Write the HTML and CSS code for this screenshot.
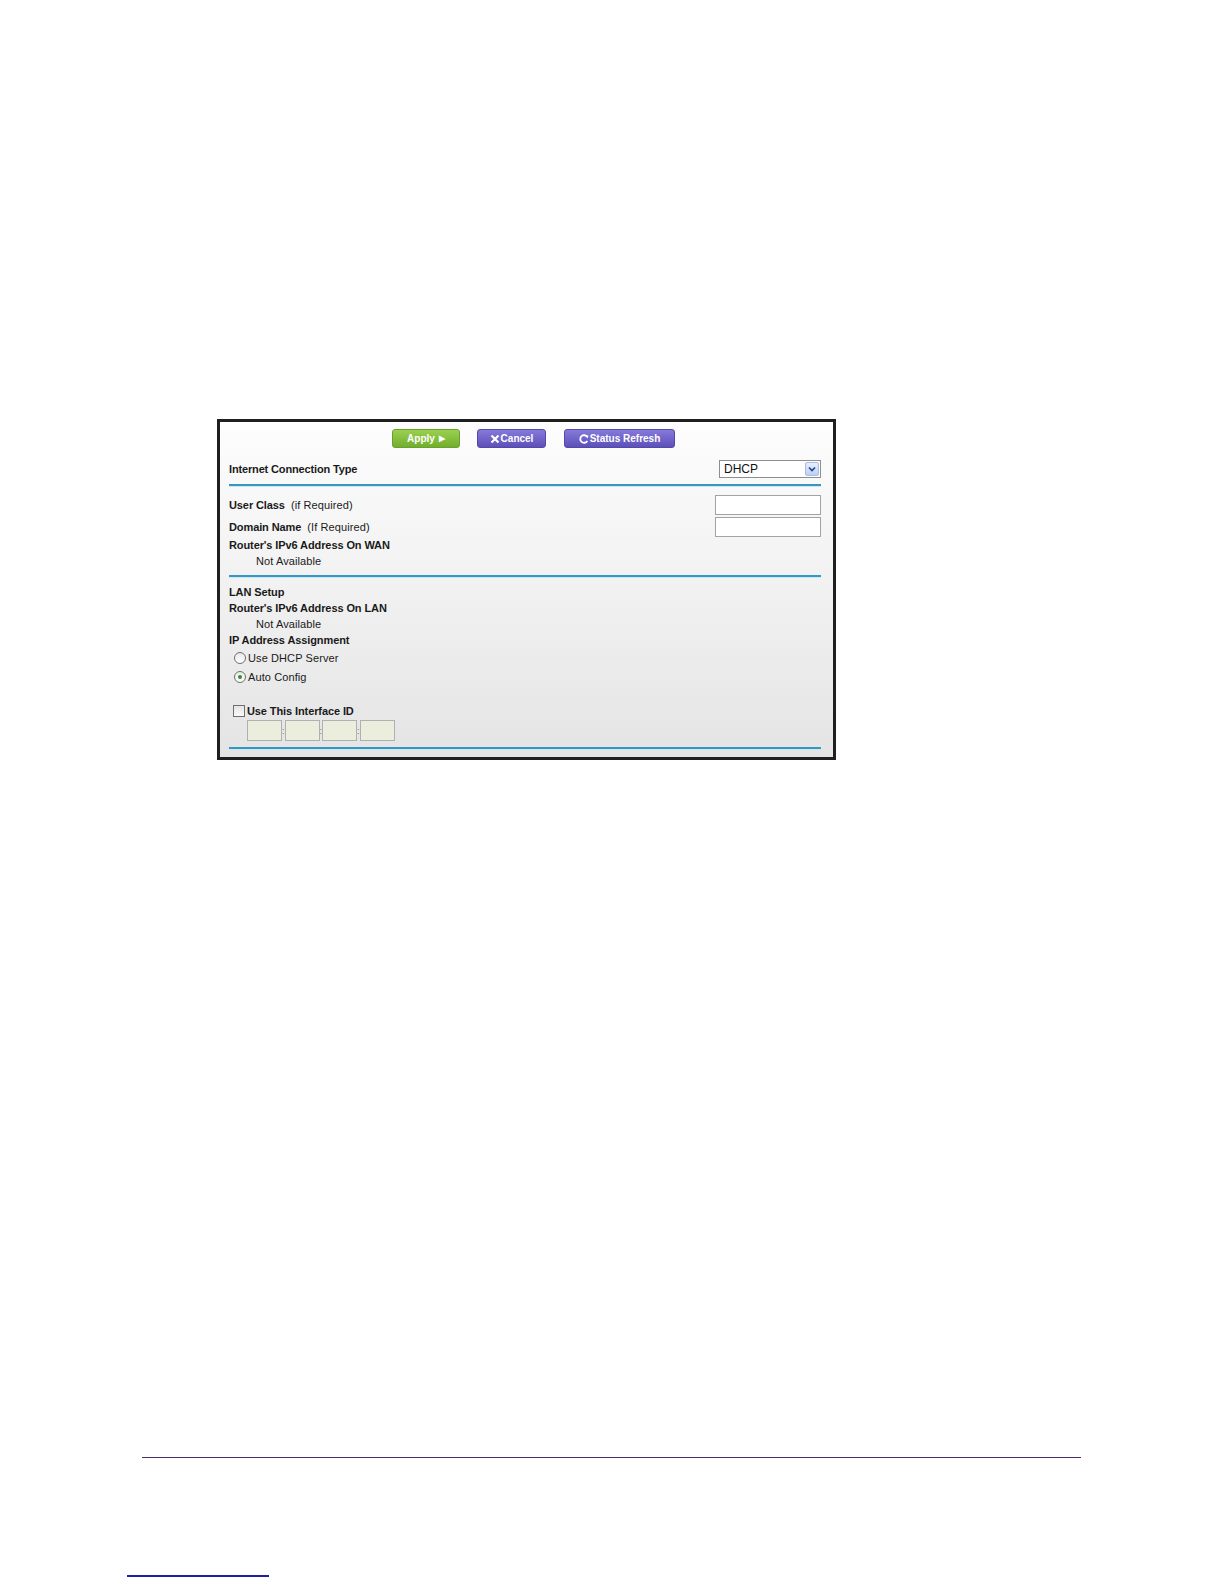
FILE: index.html
```html
<!DOCTYPE html>
<html lang="en">
<head>
<meta charset="utf-8">
<title>Internet Connection Type - DHCP</title>
<link rel="stylesheet" href="styles.css">
</head>
<body>
<div class="figure">
  <div class="toolbar">
    <span class="btn btn-green">Apply <span class="tri">&#9654;</span></span>
    <span class="btn btn-purple"><svg class="ico" viewBox="0 0 10 10" width="10" height="10"><path d="M1.5 1.5 L8.5 8.5 M8.5 1.5 L1.5 8.5" stroke="#fff" stroke-width="2.2" fill="none"/></svg>Cancel</span>
    <span class="btn btn-purple btn-wide"><svg class="ico" viewBox="0 0 10 10" width="10" height="10"><path d="M8.3 3 A3.8 3.8 0 1 0 8.3 7" stroke="#fff" stroke-width="1.8" fill="none"/><path d="M6.6 1.2 L9.4 1.6 L8.8 4.4 Z" fill="#fff"/></svg>Status Refresh</span>
  </div>

  <div class="row row-ict">
    <span class="lbl">Internet Connection Type</span>
    <span class="select"><span class="select-val">DHCP</span><span class="select-btn"><svg viewBox="0 0 8 6" width="8" height="6"><path d="M1 1.5 L4 4.5 L7 1.5" stroke="#24408a" stroke-width="1.6" fill="none"/></svg></span></span>
  </div>
  <div class="rule rule-1"></div>

  <div class="row row-field">
    <span><span class="lbl">User Class</span><span class="hint">(if Required)</span></span>
    <span class="input"></span>
  </div>
  <div class="row row-field row-field2">
    <span><span class="lbl">Domain Name</span><span class="hint">(If Required)</span></span>
    <span class="input"></span>
  </div>
  <div class="row line"><span class="lbl">Router's IPv6 Address On WAN</span></div>
  <div class="row line indent">Not Available</div>
  <div class="rule rule-2"></div>

  <div class="row line lan"><span class="lbl">LAN Setup</span></div>
  <div class="row line"><span class="lbl">Router's IPv6 Address On LAN</span></div>
  <div class="row line indent">Not Available</div>
  <div class="row line"><span class="lbl">IP Address Assignment</span></div>
  <div class="row line opt opt-1"><span class="radio"></span>Use DHCP Server</div>
  <div class="row line opt opt-2"><span class="radio checked"></span>Auto Config</div>
  <div class="row line opt opt-3"><span class="check"></span><span class="lbl">Use This Interface ID</span></div>
  <div class="ifid">
    <span class="idbox"></span><span class="colon">:</span><span class="idbox"></span><span class="colon">:</span><span class="idbox"></span><span class="colon">:</span><span class="idbox"></span>
  </div>
  <div class="rule rule-3"></div>
</div>

<div class="page-rule"></div>
<div class="page-link"></div>
</body>
</html>
```

FILE: styles.css
```css
html, body {
  margin: 0;
  padding: 0;
  background: #ffffff;
}

body {
  font-family: "Liberation Sans", Arial, sans-serif;
  color: #1a1a1a;
}

.figure {
  box-sizing: border-box;
  width: 619px;
  margin: 419px 0 0 217px;
  border: 3px solid #1f1f1f;
  padding: 7px 12px 8px 9px;
  background: linear-gradient(#fdfdfd 0%, #f1f1f1 50%, #e4e4e4 100%);
  font-size: 11px;
  letter-spacing: 0.1px;
}

.toolbar {
  display: flex;
  gap: 17px;
  padding-left: 163px;
  height: 19px;
}

.btn {
  box-sizing: border-box;
  height: 19px;
  border-radius: 3px;
  color: #fff;
  font-weight: bold;
  font-size: 10px;
  display: flex;
  align-items: center;
  justify-content: center;
  letter-spacing: 0;
}

.btn-green {
  width: 68px;
  background: linear-gradient(#9bd04f, #72ae2e);
  border: 1px solid #69a12b;
  gap: 4px;
}

.tri {
  font-size: 8px;
}

.btn-purple {
  width: 69px;
  background: linear-gradient(#8579db, #5d50b8);
  border: 1px solid #5448a8;
}

.btn-wide {
  width: 111px;
}

.toolbar .btn-purple + .btn-purple {
  margin-left: 1px;
}

.ico {
  margin-right: 1px;
}

.row {
  display: flex;
  align-items: center;
  justify-content: space-between;
}

.lbl {
  font-weight: bold;
  letter-spacing: -0.1px;
}

.hint {
  margin-left: 6px;
}

.row-ict {
  margin-top: 10px;
  height: 22px;
}

.row-ict .lbl {
  letter-spacing: -0.15px;
}

.select {
  box-sizing: border-box;
  width: 102px;
  height: 18px;
  border: 1px solid #8e8e8e;
  background: #fff;
  display: flex;
  align-items: center;
  justify-content: space-between;
  padding: 0 1px 0 4px;
}

.select-val {
  font-size: 12px;
  letter-spacing: 0;
  color: #111;
}

.select-btn {
  box-sizing: border-box;
  width: 14px;
  height: 14px;
  background: linear-gradient(#e6efff, #bcd0f4);
  border: 1px solid #a9bde3;
  border-radius: 2px;
  display: flex;
  align-items: center;
  justify-content: center;
}

.rule {
  height: 2px;
  background: #3a95c0;
  box-shadow: 0 1px 0 #c4ecf8;
}

.rule-1 {
  margin-top: 4px;
}

.rule-2 {
  margin-top: 6px;
}

.rule-3 {
  margin-top: 6px;
}

.row-field {
  margin-top: 9px;
  height: 20px;
}

.row-field2 {
  margin-top: 2px;
}

.input {
  box-sizing: border-box;
  width: 106px;
  height: 20px;
  background: #fff;
  border: 1px solid #a3a3a3;
}

.line {
  height: 16px;
  justify-content: flex-start;
}

.indent {
  padding-left: 27px;
}

.lan {
  margin-top: 7px;
}

.opt {
  padding-left: 5px;
}

.opt-1 {
  margin-top: 2px;
}

.opt-2 {
  margin-top: 3px;
}

.opt-3 {
  margin-top: 18px;
  padding-left: 4px;
}

.radio {
  box-sizing: border-box;
  width: 12px;
  height: 12px;
  border-radius: 50%;
  border: 1px solid #6f6f6f;
  background: linear-gradient(#e9e9e9, #ffffff);
  margin-right: 2px;
  display: flex;
  align-items: center;
  justify-content: center;
}

.radio.checked::after {
  content: "";
  width: 4px;
  height: 4px;
  border-radius: 50%;
  background: #2f8f2f;
}

.check {
  box-sizing: border-box;
  width: 12px;
  height: 12px;
  border: 1px solid #6f6f6f;
  background: linear-gradient(#e4e4e4, #fafafa);
  margin-right: 2px;
}

.ifid {
  margin-top: 1px;
  padding-left: 18px;
  display: flex;
  align-items: center;
  height: 21px;
}

.idbox {
  box-sizing: border-box;
  width: 35px;
  height: 21px;
  background: #eceedd;
  border: 1px solid #b0b0b0;
}

.colon {
  width: 2.5px;
  font-size: 9px;
  line-height: 20px;
  text-align: center;
  color: #777;
}

.page-rule {
  margin: 697px 0 0 142px;
  width: 939px;
  height: 1px;
  background: #4f2d63;
}

.page-link {
  margin: 117px 0 0 127px;
  width: 142px;
  height: 2px;
  background: #1d1da6;
}
```
